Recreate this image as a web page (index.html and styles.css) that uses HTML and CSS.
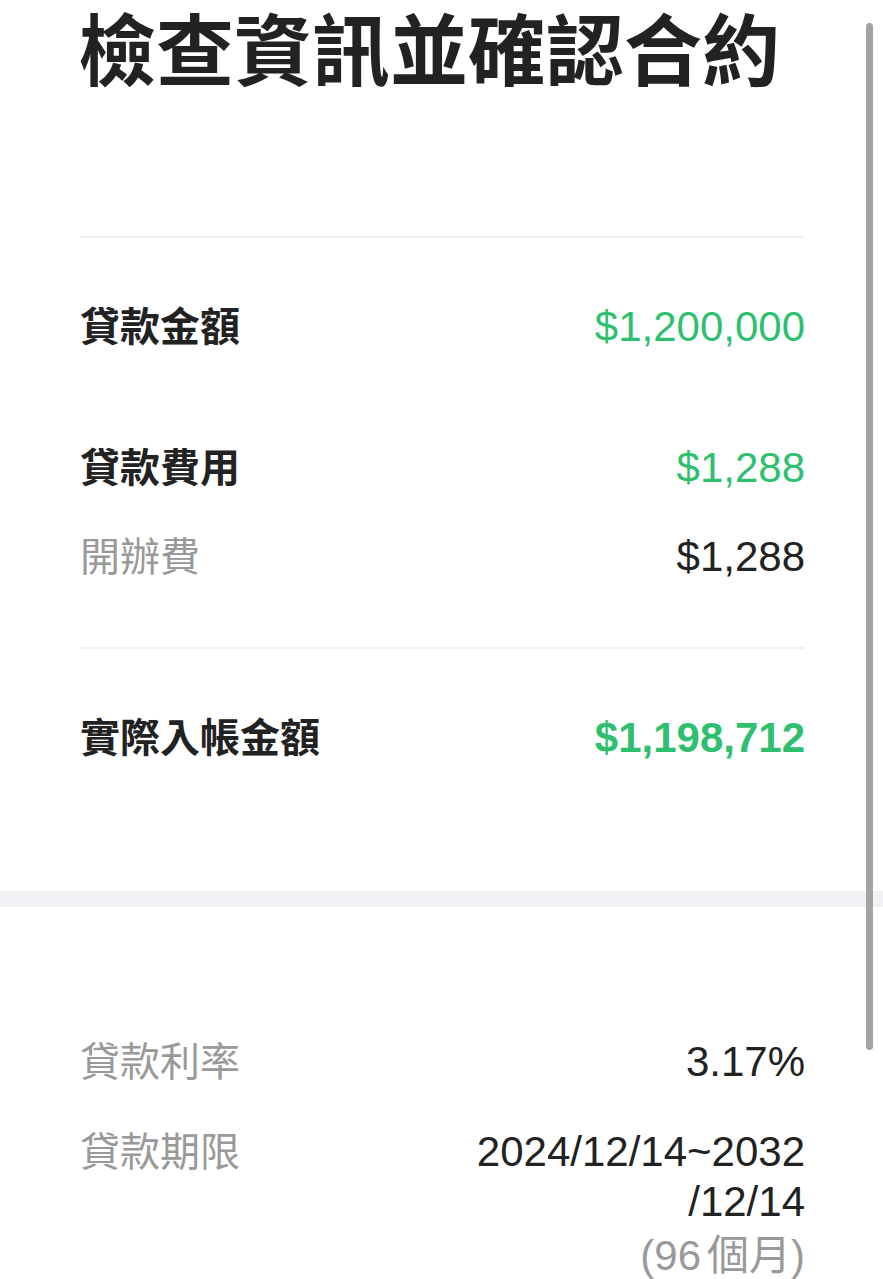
FILE: index.html
```html
<!DOCTYPE html>
<html lang="zh-Hant">
<head>
    <meta charset="UTF-8">
    <meta name="viewport" content="width=device-width, initial-scale=1.0">
    <title>檢查資訊並確認合約</title>
    <link rel="stylesheet" href="styles.css">
</head>
<body>
    <main class="sheet">
        <header class="sheet-head">
            <h1>檢查資訊並確認合約</h1>
        </header>

        <section class="block summary">
            <div class="row row-main">
                <span class="label">貸款金額</span>
                <span class="value green">$1,200,000</span>
            </div>
            <div class="group">
                <div class="row row-main">
                    <span class="label">貸款費用</span>
                    <span class="value green">$1,288</span>
                </div>
                <div class="row">
                    <span class="label muted">開辦費</span>
                    <span class="value">$1,288</span>
                </div>
            </div>
        </section>

        <section class="block total">
            <div class="row row-main">
                <span class="label">實際入帳金額</span>
                <span class="value green strong">$1,198,712</span>
            </div>
        </section>

        <div class="band"></div>

        <section class="block terms">
            <div class="row">
                <span class="label muted">貸款利率</span>
                <span class="value">3.17%</span>
            </div>
            <div class="row">
                <span class="label muted">貸款期限</span>
                <span class="value stack">
                    <span>2024/12/14~2032</span>
                    <span>/12/14</span>
                    <span class="muted months">(96<span class="unit">個月</span>)</span>
                </span>
            </div>
        </section>
    </main>
    <div class="scrollbar"></div>
</body>
</html>
```

FILE: styles.css
```css
body {
    margin: 0;
    padding: 0;
    background-color: #fff;
    color: #222;
    font-family: "Noto Sans CJK TC", "Noto Sans", sans-serif;
}

.sheet {
    display: flex;
    flex-direction: column;
}

.sheet-head {
    padding: 0 78px 0 78px;
}

.sheet-head h1 {
    margin: 0;
    font-size: 78px;
    line-height: 92px;
    font-weight: 700;
    color: #222;
}

.block {
    margin: 0 78px 0 80px;
    display: flex;
    flex-direction: column;
}

.summary {
    margin-top: 144px;
    border-top: 2px solid #f0f0f0;
    padding: 58px 0 65px;
    gap: 85px;
}

.group {
    display: flex;
    flex-direction: column;
    gap: 33px;
}

.total {
    border-top: 2px solid #f0f0f0;
    padding: 58px 0 128px;
}

.band {
    height: 16px;
    background-color: #f0f2f6;
}

.terms {
    padding-top: 124px;
    gap: 34px;
}

.row {
    display: flex;
    justify-content: space-between;
    align-items: flex-start;
    line-height: 56px;
    font-size: 40px;
}

.label {
    font-weight: 400;
}

.row-main .label {
    font-weight: 700;
}

.muted {
    color: #999;
}

.value {
    margin-top: 6px;
    line-height: 50px;
    font-family: "Liberation Sans", Arial, sans-serif;
    font-size: 42px;
    text-align: right;
    color: #222;
}

.green {
    color: #2ebf6f;
}

.strong {
    font-weight: 700;
}

.stack {
    display: flex;
    flex-direction: column;
    align-items: flex-end;
}

.stack > span {
    line-height: 50px;
}

.stack .months {
    font-family: "Liberation Sans", "Noto Sans CJK TC", sans-serif;
}

.months .unit {
    margin-left: 6px;
    font-family: "Noto Sans CJK TC", sans-serif;
}

.scrollbar {
    position: fixed;
    top: 23px;
    right: 10px;
    width: 7px;
    height: 1027px;
    border-radius: 4px;
    background-color: #a3a3a3;
}
```
